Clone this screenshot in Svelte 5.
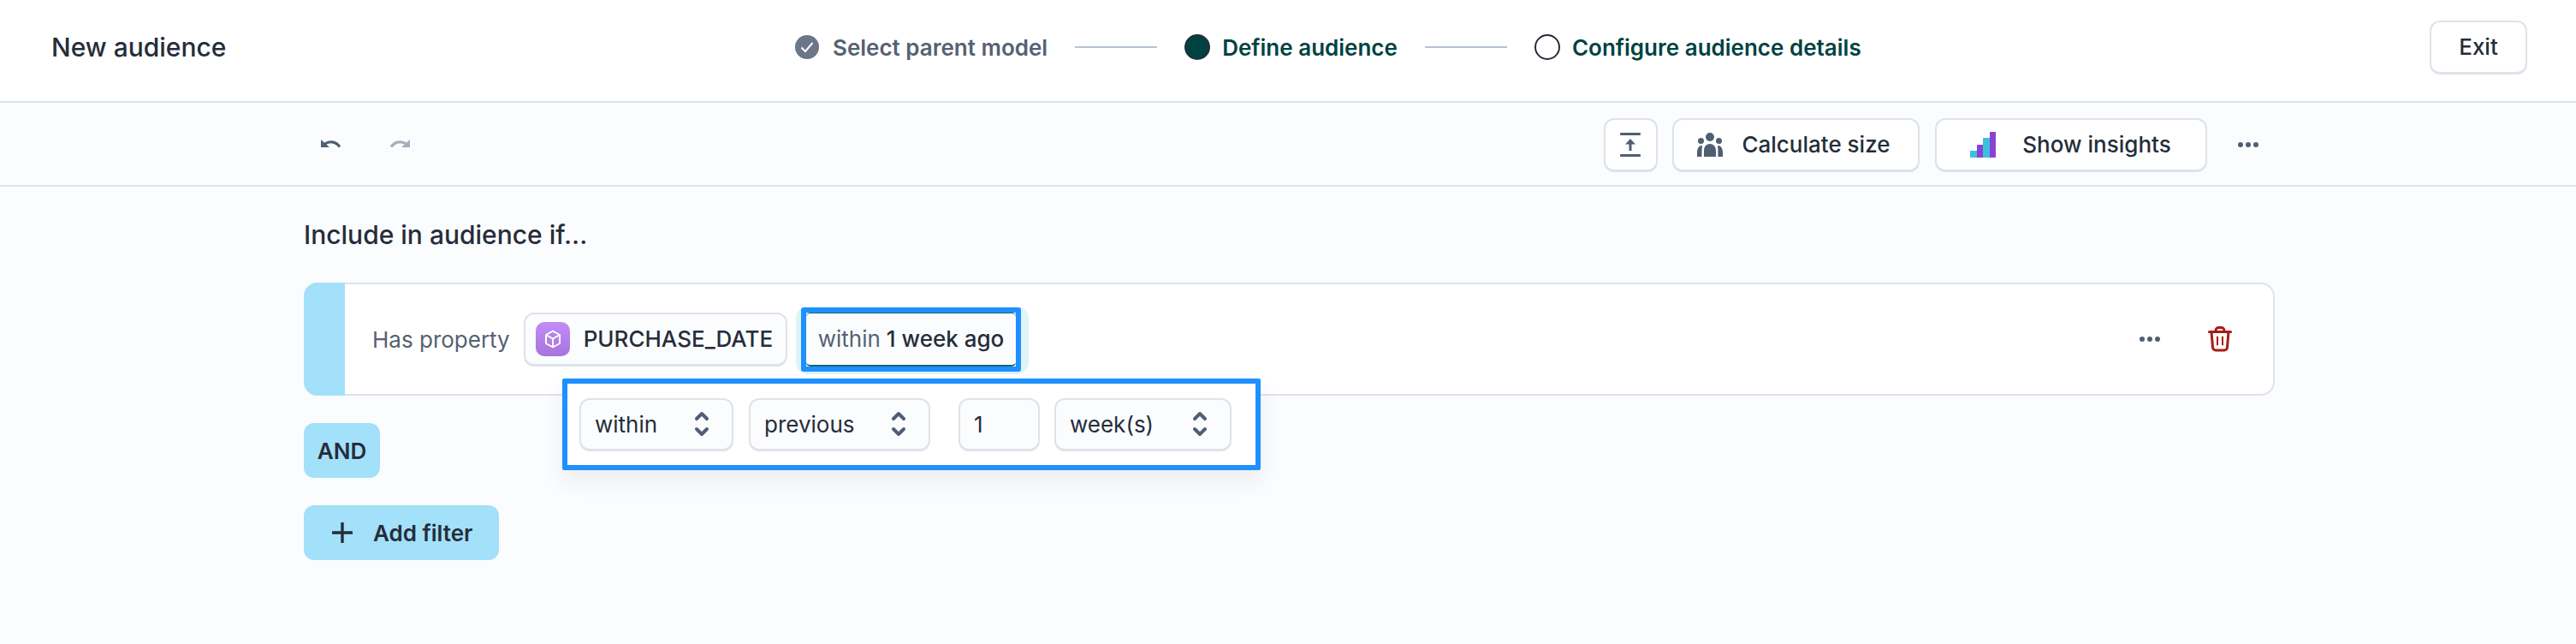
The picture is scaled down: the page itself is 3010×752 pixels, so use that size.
<script>
	const selects = [
		{ label: "within", width: 180 },
		{ label: "previous", width: 212 }
	];
</script>

<div class="page">
	<header class="top">
		<div class="title">New audience</div>
		<ol class="steps">
			<li class="step done">
				<svg width="30" height="30" viewBox="0 0 30 30"><circle cx="15" cy="15" r="14" fill="#6b7788" /><path d="M8.5 15.5l4.5 4.5 8.5-10" fill="none" stroke="#fff" stroke-width="2" /></svg>
				<span>Select parent model</span>
			</li>
			<li class="line"></li>
			<li class="step">
				<span class="dot current"></span>
				<span>Define audience</span>
			</li>
			<li class="line"></li>
			<li class="step">
				<span class="dot"></span>
				<span>Configure audience details</span>
			</li>
		</ol>
		<button class="btn exit">Exit</button>
	</header>

	<div class="toolbar">
		<div class="inner">
			<div class="history">
				<svg width="24" height="10" viewBox="0 0 24 10" fill="#4f5f73"><path d="M0 0v9h10z" /><path d="M3 6.500C9 1 17 1.500 22 8.500" fill="none" stroke="#4f5f73" stroke-width="3.200" /></svg>
				<svg width="24" height="10" viewBox="0 0 24 10" fill="#a3afbf"><path d="M24 0v9H14z" /><path d="M21 6.500C15 1 7 1.500 2 8.500" fill="none" stroke="#a3afbf" stroke-width="3.200" /></svg>
			</div>
			<div class="actions">
				<button class="btn icon" aria-label="Upload">
					<svg width="24" height="28" viewBox="0 0 24 28" fill="#4f5f73"><rect width="24" height="3" rx="1" /><rect y="25" width="24" height="3" rx="1" /><path d="M12 7l6 6.500h-4.500V21h-3v-7.500H6z" /></svg>
				</button>
				<button class="btn calc">
					<svg width="30" height="28" viewBox="0 0 30 28" fill="#4f5f73"><circle cx="15" cy="5" r="5" /><circle cx="4.500" cy="9.500" r="3.500" /><circle cx="25.500" cy="9.500" r="3.500" /><path d="M8 28v-8a7 7 0 0 1 14 0v8z" /><path d="M0 28v-5c0-4 1.500-7 4.500-8 1 0 1.500.3 1.500 1-.500 2-.500 8-.500 12zM30 28v-5c0-4-1.500-7-4.500-8-1 0-1.500.3-1.500 1 .5 2 .5 8 .5 12z" /></svg>
					<span>Calculate size</span>
				</button>
				<button class="btn insights">
					<svg width="30" height="30" viewBox="0 0 30 30"><rect y="22" width="8" height="8" fill="#3cc0dc" /><rect x="8" y="15" width="7" height="15" fill="#8a42d4" /><rect x="15" y="7" width="8" height="23" fill="#3cc0dc" /><rect x="23" width="7" height="30" fill="#8a42d4" /></svg>
					<span>Show insights</span>
				</button>
				<span class="more bar-more"><i></i><i></i><i></i></span>
			</div>
		</div>
	</div>

	<main class="body">
		<h2>Include in audience if...</h2>

		<div class="card">
			<div class="bar"></div>
			<div class="row">
				<span class="muted">Has property</span>
				<span class="chip prop">
					<span class="cube">
						<svg width="20" height="22" viewBox="0 0 20 22" fill="none" stroke="#fff" stroke-width="2" stroke-linejoin="round"><path d="M10 1.500l8 4.500v10l-8 4.500L2 16V6zM2 6l8 4.500L18 6M10 10.500v10" /></svg>
					</span>
					PURCHASE_DATE
				</span>
				<span class="marked">
					<span class="chip when"><span class="muted">within</span> 1 week ago</span>
				</span>
			</div>
			<div class="end">
				<span class="more"><i></i><i></i><i></i></span>
				<svg width="28" height="30" viewBox="0 0 28 30" fill="none" stroke="#a81c16" stroke-width="3" stroke-linecap="round" stroke-linejoin="round"><path d="M1.500 6.500h25M9 6.500V5a3.500 3.500 0 0 1 3.500-3.500h3A3.500 3.500 0 0 1 19 5v1.500M4 6.500l1.500 18a3.500 3.500 0 0 0 3.500 3.500h10a3.500 3.500 0 0 0 3.500-3.500l1.500-18" /><path d="M11 12.500v9M17 12.500v9" stroke-width="2" /></svg>
			</div>

			<div class="popover">
				{#each selects as s}
					<span class="field" style="width: {s.width}px">
						{s.label}
						<svg width="18" height="30" viewBox="0 0 18 30" fill="none" stroke="#4f5f73" stroke-width="4" stroke-linecap="round" stroke-linejoin="round"><path d="M3 9l6-6 6 6M3 21l6 6 6-6" /></svg>
					</span>
				{/each}
				<span class="field num">1</span>
				<span class="field weeks">
					week(s)
					<svg width="18" height="30" viewBox="0 0 18 30" fill="none" stroke="#4f5f73" stroke-width="4" stroke-linecap="round" stroke-linejoin="round"><path d="M3 9l6-6 6 6M3 21l6 6 6-6" /></svg>
				</span>
			</div>
		</div>

		<div class="and">AND</div>

		<button class="add">
			<svg width="24" height="24" viewBox="0 0 24 24" stroke="#252d3a" stroke-width="3.400" stroke-linecap="round"><path d="M12 1v22M1 12h22" /></svg>
			<span>Add filter</span>
		</button>
	</main>
</div>

<style>
	:global(body) {
		margin: 0;
		background: #fbfcfe;
	}

	.page {
		height: 752px;
		font-family: Inter, "Noto Sans", sans-serif;
		color: #252d3a;
		font-size: 28px;
		overflow: hidden;
	}

	button {
		font: inherit;
		color: inherit;
	}

	.top {
		height: 110px;
		border-bottom: 2px solid #dde3ea;
		background: #fff;
		display: flex;
		align-items: center;
		justify-content: space-between;
		padding: 0 57px 8px 60px;
	}

	.title {
		font-size: 30px;
		font-weight: 450;
		width: 868px;
	}

	.steps {
		list-style: none;
		margin: 0;
		padding: 0;
		display: flex;
		align-items: center;
		gap: 32px;
		font-weight: 600;
		color: #004242;
		font-size: 26px;
		flex: 1;
	}

	.step {
		display: flex;
		align-items: center;
		gap: 14px;
	}

	.done {
		gap: 15px;
		color: #566173;
	}

	.line {
		width: 96px;
		height: 2px;
		background: #b7c3d0;
	}

	.dot {
		width: 26px;
		height: 26px;
		border-radius: 50%;
		border: 2px solid #252d3a;
	}

	.dot.current {
		background: #004242;
	}

	.btn {
		display: flex;
		align-items: center;
		justify-content: center;
		height: 63px;
		box-sizing: border-box;
		background: #fff;
		border: 2px solid #dde3ea;
		border-bottom-width: 3px;
		border-radius: 12px;
		padding: 0;
		font-weight: 550;
		font-size: 26px;
	}

	.exit {
		width: 114px;
	}

	.toolbar {
		height: 96px;
		border-bottom: 2px solid #dde3ea;
	}

	.inner {
		width: 2303px;
		margin-left: 355px;
		height: 100%;
		display: flex;
		align-items: center;
		justify-content: space-between;
	}

	.history {
		display: flex;
		gap: 56px;
		padding-left: 20px;
	}

	.actions {
		display: flex;
		align-items: center;
		gap: 17px;
		margin-right: 19px;
		margin-top: 2px;
	}

	.icon {
		width: 63px;
	}

	.calc {
		width: 289px;
		gap: 22px;
		padding-right: 4px;
	}

	.insights {
		width: 318px;
		gap: 31px;
		margin-left: 1px;
	}

	.more {
		display: flex;
		gap: 2.500px;
	}

	.more i {
		width: 6.500px;
		height: 6.500px;
		border-radius: 50%;
		background: #4f5f73;
	}

	.bar-more {
		margin-left: 19px;
	}

	.body {
		margin-left: 355px;
		width: 2303px;
	}

	h2 {
		margin: 0;
		padding-top: 38px;
		font-weight: 450;
		font-size: 30px;
		line-height: 36px;
		color: #252d3a;
	}

	.card {
		position: relative;
		display: flex;
		align-items: center;
		box-sizing: border-box;
		height: 132px;
		margin-top: 38px;
		background: #fff;
		border: 2px solid #dde3ea;
		border-radius: 16px;
	}

	.bar {
		position: absolute;
		left: -2px;
		top: -2px;
		bottom: -2px;
		width: 48px;
		background: #a3e0f9;
		border-radius: 16px 0 0 16px;
	}

	.row {
		display: flex;
		align-items: center;
		padding-left: 78px;
		flex: 1;
		font-size: 26px;
		isolation: isolate;
	}

	.muted {
		color: #566173;
	}

	.chip {
		display: flex;
		align-items: center;
		height: 63px;
		box-sizing: border-box;
		background: #fbfcfe;
		border: 2px solid #dde3ea;
		border-bottom-width: 3px;
		border-radius: 12px;
		white-space: pre;
	}

	.prop {
		width: 308px;
		margin-left: 16px;
		padding-left: 12px;
		gap: 16px;
		font-weight: 450;
	}

	.prop .cube {
		margin-right: -7px;
	}

	.cube {
		width: 40px;
		height: 40px;
		border-radius: 10px;
		background: linear-gradient(#c08cf8, #a873dc);
		display: flex;
		align-items: center;
		justify-content: center;
	}

	.marked {
		position: relative;
		margin-left: 16px;
		border: 6px solid #1e90ff;
		border-radius: 3px;
		width: 257px;
		height: 75px;
		box-sizing: border-box;
	}

	.marked::before {
		content: "";
		position: absolute;
		inset: -7px -15px -9px -12px;
		background: #e0f3f6;
		border-radius: 14px;
		z-index: -1;
	}

	.when {
		height: 100%;
		border-width: 1px 0 2px;
		border-color: #0d6a70;
		border-radius: 5px;
		padding-left: 14px;
		font-weight: 450;
	}

	.when .muted {
		font-weight: 400;
	}

	.end {
		display: flex;
		align-items: center;
		gap: 56px;
		padding-right: 48px;
	}

	.popover {
		position: absolute;
		left: 300px;
		top: 110px;
		width: 816px;
		height: 107px;
		box-sizing: border-box;
		background: #fff;
		border: 6px solid #1e90ff;
		border-radius: 2px;
		box-shadow: 0 12px 24px rgba(40, 50, 70, 0.08);
		display: flex;
		align-items: center;
		padding-left: 14px;
		font-size: 26px;
		z-index: 2;
	}

	.field {
		display: flex;
		align-items: center;
		justify-content: space-between;
		height: 62px;
		box-sizing: border-box;
		background: #fbfcfe;
		border: 2px solid #dde3ea;
		border-bottom-width: 3px;
		border-radius: 12px;
		padding: 0 26px 0 16px;
		margin-right: 18px;
	}

	.num {
		width: 95px;
		margin-left: 15px;
		margin-right: 17px;
	}

	.weeks {
		width: 207px;
		margin-right: 0;
	}

	.and {
		width: 89px;
		height: 64px;
		margin-top: 32px;
		background: #a3e0f9;
		border-radius: 12px;
		display: flex;
		align-items: center;
		justify-content: center;
		font-weight: 600;
		font-size: 26px;
	}

	.add {
		display: flex;
		align-items: center;
		gap: 24px;
		width: 228px;
		height: 64px;
		margin-top: 32px;
		padding: 0 0 0 33px;
		border: 0;
		background: #a3e0f9;
		border-radius: 12px;
		font-weight: 600;
		font-size: 26px;
	}
</style>
